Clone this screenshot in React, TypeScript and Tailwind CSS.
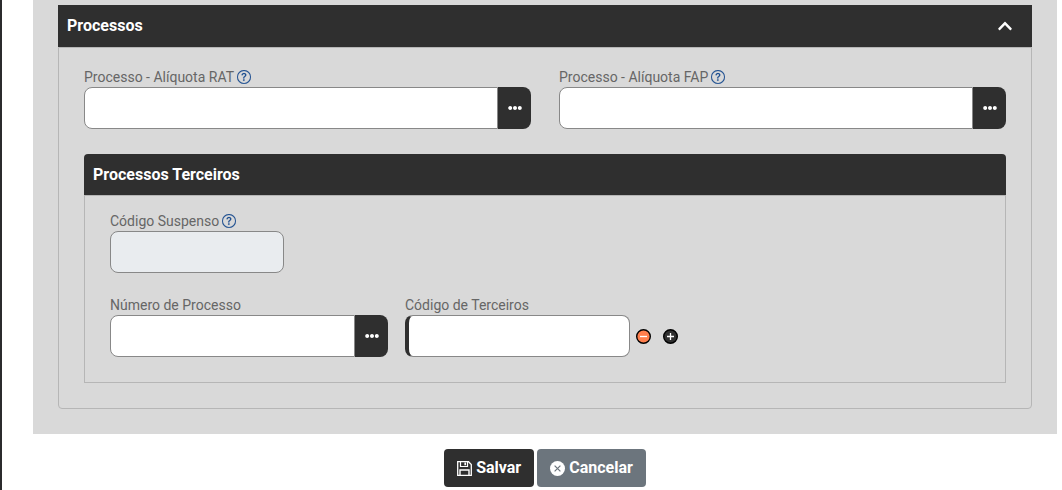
import React, { useId } from "react";
import { BsQuestionCircle } from "react-icons/bs";
import { FaChevronUp, FaEllipsisH } from "react-icons/fa";

type FieldProps = {
  label: string;
  help?: boolean;
  lookup?: boolean;
  required?: boolean;
  disabled?: boolean;
  className?: string;
};

function Field({ label, help, lookup, required, disabled, className = "" }: FieldProps) {
  const id = useId();
  const shape = lookup ? "rounded-l-lg" : "rounded-lg";
  const edge = required ? "border-l-4 border-l-[#2f2f2f]" : "";
  const fill = disabled ? "bg-[#e9ecef]" : "bg-white";
  return (
    <div className={`min-w-0 ${className}`}>
      <div className="flex h-5 items-center gap-[3px] text-sm text-[#666666]">
        <label htmlFor={id}>{label}</label>
        {help && (
          <button type="button" aria-label={`Ajuda: ${label}`} className="text-[#1d4f91]">
            <BsQuestionCircle size={14} strokeWidth={0.2} />
          </button>
        )}
      </div>
      <div className="flex h-[42px]">
        <input
          id={id}
          type="text"
          disabled={disabled}
          required={required}
          className={`h-full w-full min-w-0 flex-1 border border-[#888888] px-3 text-sm outline-none ${shape} ${edge} ${fill}`}
        />
        {lookup && (
          <button
            type="button"
            aria-label={`Pesquisar ${label}`}
            className="flex w-[33px] shrink-0 items-center justify-center rounded-r-lg bg-[#2f2f2f] text-white"
          >
            <FaEllipsisH size={14} />
          </button>
        )}
      </div>
    </div>
  );
}

function SaveIcon() {
  return (
    <svg width="15" height="15" viewBox="0 0 15 15" fill="none" stroke="currentColor" aria-hidden="true">
      <path d="M0.700 0.700h10.800l2.800 2.800v10.800H0.700z" strokeWidth="1.300" />
      <path d="M3.500 0.700v4.800h7V0.700" strokeWidth="1.200" />
      <path d="M8.200 1.500v2.800" strokeWidth="1.600" />
      <path d="M3 14V9h9V14" strokeWidth="1.400" />
    </svg>
  );
}

function CancelIcon() {
  return (
    <svg width="15" height="15" viewBox="0 0 16 16" aria-hidden="true">
      <circle cx="8" cy="8" r="8" fill="currentColor" />
      <path d="M4.900 4.900l6.200 6.200M11.100 4.900l-6.200 6.200" stroke="#6c757d" strokeWidth="1.300" />
    </svg>
  );
}

function RoundIcon({ fill, plus }: { fill: string; plus?: boolean }) {
  return (
    <svg width="15" height="15" viewBox="0 0 15 15" aria-hidden="true">
      <circle cx="7.500" cy="7.500" r="6.800" fill={fill} stroke="#000000" strokeWidth="1.400" />
      <path d={plus ? "M4 7.500h7M7.500 4v7" : "M4 7.500h7"} stroke="#ffffff" strokeWidth="1.300" />
    </svg>
  );
}

export default function App() {
  return (
    <form
      onSubmit={(e) => e.preventDefault()}
      className="min-h-screen border-l-2 border-[#2b2b2d] bg-white pr-[5px] pl-[31px] font-['Roboto',sans-serif]"
    >
      <main className="bg-[#d9d9d9] px-[25px] pt-[5px] pb-[25px]">
        <section>
          <header className="flex h-[42px] items-center justify-between bg-[#2f2f2f] pr-[19px] pl-[9px] text-white">
            <h2 className="text-base font-bold">Processos</h2>
            <button type="button" aria-label="Recolher Processos" aria-expanded="true">
              <FaChevronUp size={16} />
            </button>
          </header>
          <div className="rounded-b-sm border border-[#b6b6b6] px-[25px] pt-[19px] pb-[25px]">
            <div className="grid grid-cols-2 gap-7">
              <Field label="Processo - Alíquota RAT" help lookup />
              <Field label="Processo - Alíquota FAP" help lookup />
            </div>

            <section className="mt-[25px]">
              <header className="flex h-[41px] items-center rounded-t bg-[#2f2f2f] px-[9px] text-white">
                <h3 className="text-base font-bold">Processos Terceiros</h3>
              </header>
              <div className="flex flex-col gap-[22px] border border-[#b6b6b6] px-[25px] pt-[15px] pb-[25px]">
                <Field label="Código Suspenso" help disabled className="w-[174px]" />
                <div className="flex items-end">
                  <Field label="Número de Processo" lookup className="w-[278px]" />
                  <Field label="Código de Terceiros" required className="ml-[17px] w-[225px]" />
                  <div className="ml-[6px] flex h-[42px] items-center gap-3">
                    <button type="button" aria-label="Remover">
                      <RoundIcon fill="#ff7f4d" />
                    </button>
                    <button type="button" aria-label="Adicionar">
                      <RoundIcon fill="#2f2f2f" plus />
                    </button>
                  </div>
                </div>
              </div>
            </section>
          </div>
        </section>
      </main>

      <footer className="flex justify-center gap-[3px] pt-[15px]">
        <button
          type="submit"
          className="flex h-[38px] items-center gap-1 rounded bg-[#2f2f2f] px-[13px] text-base font-bold text-white"
        >
          <SaveIcon />
          Salvar
        </button>
        <button
          type="button"
          className="flex h-[38px] items-center gap-1 rounded bg-[#6c757d] px-[13px] text-base font-bold text-white"
        >
          <CancelIcon />
          Cancelar
        </button>
      </footer>
    </form>
  );
}
